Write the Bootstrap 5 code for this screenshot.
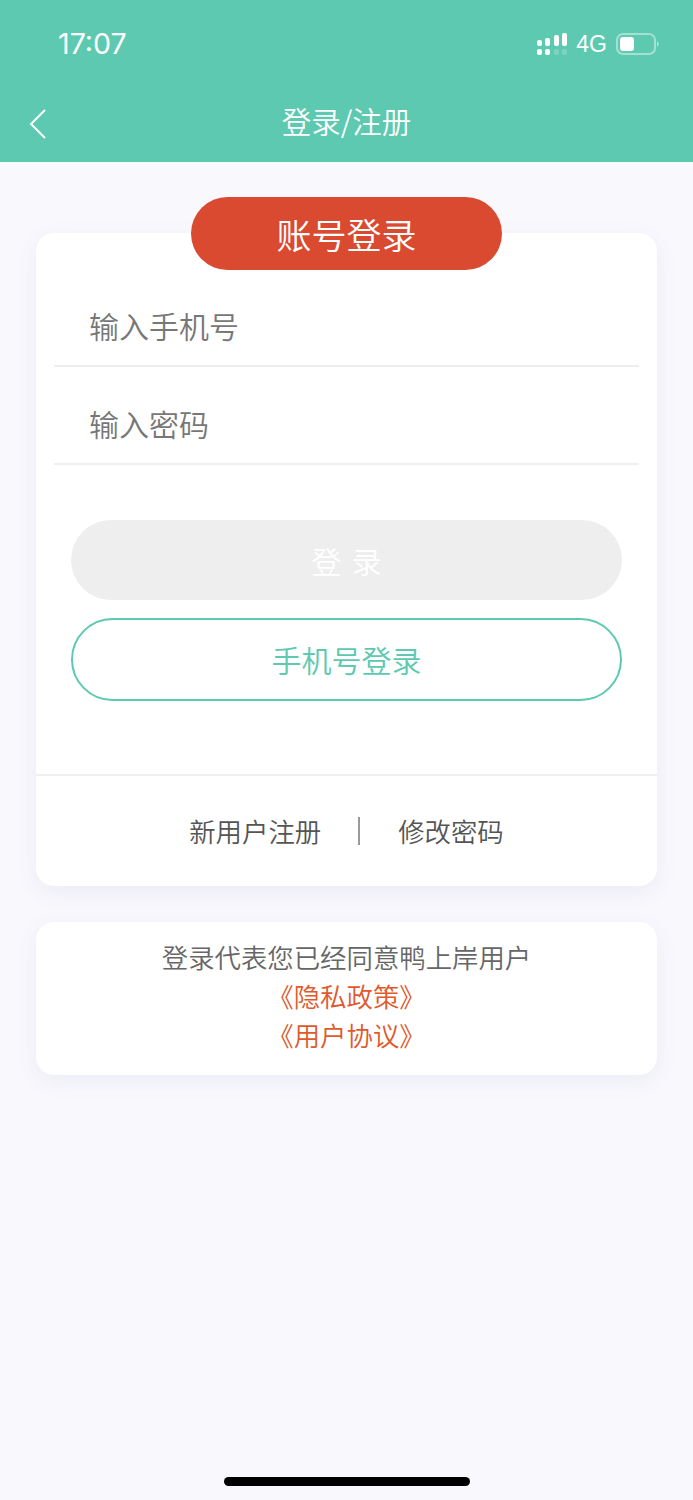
<!DOCTYPE html>
<html lang="zh-CN">
<head>
    <meta charset="UTF-8">
    <meta name="viewport" content="width=device-width, initial-scale=1.0">
    <title>登录/注册</title>
    <link href="https://cdn.jsdelivr.net/npm/bootstrap@5.3.0/dist/css/bootstrap.min.css" rel="stylesheet">
    <style>
        body {
            background-color: #f8f8fd;
            font-family: "Noto Sans CJK SC", "Liberation Sans", sans-serif;
            font-weight: 350;
            min-height: 1500px;
            position: relative;
        }
        .app-header {
            background-color: #5cc9b0;
            height: 162px;
            color: #fff;
        }
        .status-row {
            height: 88px;
            padding: 0 33px 0 58px;
        }
        .clock {
            font-family: Inter, "Liberation Sans", sans-serif;
            font-size: 28.6px;
            font-weight: 400;
        }
        .net-label {
            font-family: "Liberation Sans", sans-serif;
            font-size: 23px;
            font-weight: 400;
            margin: 0 9px 0 8px;
        }
        .title-row {
            height: 74px;
            padding-bottom: 10px;
            position: relative;
            font-size: 29.5px;
        }
        .back-icon {
            position: absolute;
            left: 27px;
            top: 19px;
        }
        .page-body {
            padding: 71px 36px 0;
        }
        .login-card, .agree-card {
            background: #fff;
            border-radius: 18px;
            box-shadow: 0 6px 22px rgba(90, 90, 140, 0.08);
        }
        .login-card {
            height: 653px;
            position: relative;
            padding: 46px 18px 0;
        }
        .pill-title {
            position: absolute;
            top: -36px;
            left: 155px;
            width: 311px;
            height: 73px;
            padding-top: 2px;
            border-radius: 37px;
            background: #d94a30;
            color: #fff;
            font-size: 35px;
        }
        .field-row {
            height: 98px;
            border-bottom: 2px solid #eeeeee;
            padding: 0 0 17px 35px;
            font-size: 30px;
            color: #777;
        }
        .field-first {
            height: 88px;
        }
        .btn-stack {
            padding: 55px 17px 0;
        }
        .btn-login-off {
            height: 80px;
            background: #eeeeee;
            border: 0;
            color: #fff;
            font-size: 30px;
            font-weight: 350;
            word-spacing: 4px;
            border-radius: 40px;
        }
        .btn-phone {
            height: 83px;
            margin-top: 18px;
            background: #fff;
            border: 2px solid #5cc9b0;
            color: #5cc9b0;
            font-size: 30px;
            font-weight: 350;
            border-radius: 42px;
        }
        .card-foot {
            position: absolute;
            left: 0;
            right: 0;
            top: 541px;
            height: 112px;
            border-top: 2px solid #f0f0f0;
            font-size: 26.4px;
            color: #555;
        }
        .foot-sep {
            width: 2px;
            height: 28px;
            background: #999;
            margin: 0 38px 0 37px;
        }
        .agree-card {
            margin-top: 36px;
            height: 153px;
            font-size: 26.4px;
            line-height: 39px;
            padding-top: 15px;
            color: #666;
        }
        .agree-link {
            color: #e0592c;
            text-decoration: none;
        }
        .home-bar {
            position: absolute;
            left: 224px;
            top: 1477px;
            width: 246px;
            height: 9px;
            border-radius: 5px;
            background: #000;
        }
    </style>
</head>
<body>

<!-- Header -->
<header class="app-header">
    <div class="status-row d-flex align-items-center justify-content-between">
        <span class="clock">17:07</span>
        <div class="d-flex align-items-center">
            <svg width="32" height="24" viewBox="0 0 32 24" fill="#fff">
                <rect x="1" y="8" width="5" height="6" rx="2"/>
                <rect x="9" y="6" width="5" height="8" rx="2"/>
                <rect x="18" y="3" width="5" height="11" rx="2"/>
                <rect x="26" y="1" width="5" height="13" rx="2"/>
                <rect x="1" y="17" width="5" height="6" rx="2"/>
                <rect x="9" y="17" width="5" height="6" rx="2"/>
                <rect x="18" y="17" width="5" height="6" rx="2" opacity="0.2"/>
                <rect x="26" y="17" width="5" height="6" rx="2" opacity="0.2"/>
            </svg>
            <span class="net-label">4G</span>
            <svg width="44" height="22" viewBox="0 0 44 22" fill="none">
                <rect x="1" y="1" width="38" height="20" rx="6" stroke="#fff" stroke-opacity="0.45" stroke-width="2"/>
                <rect x="4" y="4" width="14" height="14" rx="3" fill="#fff"/>
                <path d="M41 8 L43 11 L41 14 Z" fill="#fff" fill-opacity="0.55"/>
            </svg>
        </div>
    </div>
    <div class="title-row d-flex align-items-center justify-content-center">
        <svg class="back-icon" width="22" height="34" viewBox="0 0 22 34" fill="none">
            <path d="M18 3 L4 17 L18 31" stroke="#fff" stroke-width="2"/>
        </svg>
        <span>登录/注册</span>
    </div>
</header>

<!-- Main -->
<main class="page-body">
    <div class="login-card">
        <div class="pill-title d-flex align-items-center justify-content-center">账号登录</div>
        <div class="field-row field-first d-flex align-items-end">输入手机号</div>
        <div class="field-row d-flex align-items-end">输入密码</div>
        <div class="btn-stack d-flex flex-column">
            <button type="button" class="btn btn-login-off w-100">登 录</button>
            <button type="button" class="btn btn-phone w-100">手机号登录</button>
        </div>
        <div class="card-foot d-flex align-items-center justify-content-center">
            <span>新用户注册</span>
            <span class="foot-sep"></span>
            <span>修改密码</span>
        </div>
    </div>

    <div class="agree-card text-center">
        <div>登录代表您已经同意鸭上岸用户</div>
        <div><a class="agree-link" href="#">《隐私政策》</a></div>
        <div><a class="agree-link" href="#">《用户协议》</a></div>
    </div>
</main>

<div class="home-bar"></div>

<script src="https://cdn.jsdelivr.net/npm/bootstrap@5.3.0/dist/js/bootstrap.bundle.min.js"></script>
</body>
</html>
